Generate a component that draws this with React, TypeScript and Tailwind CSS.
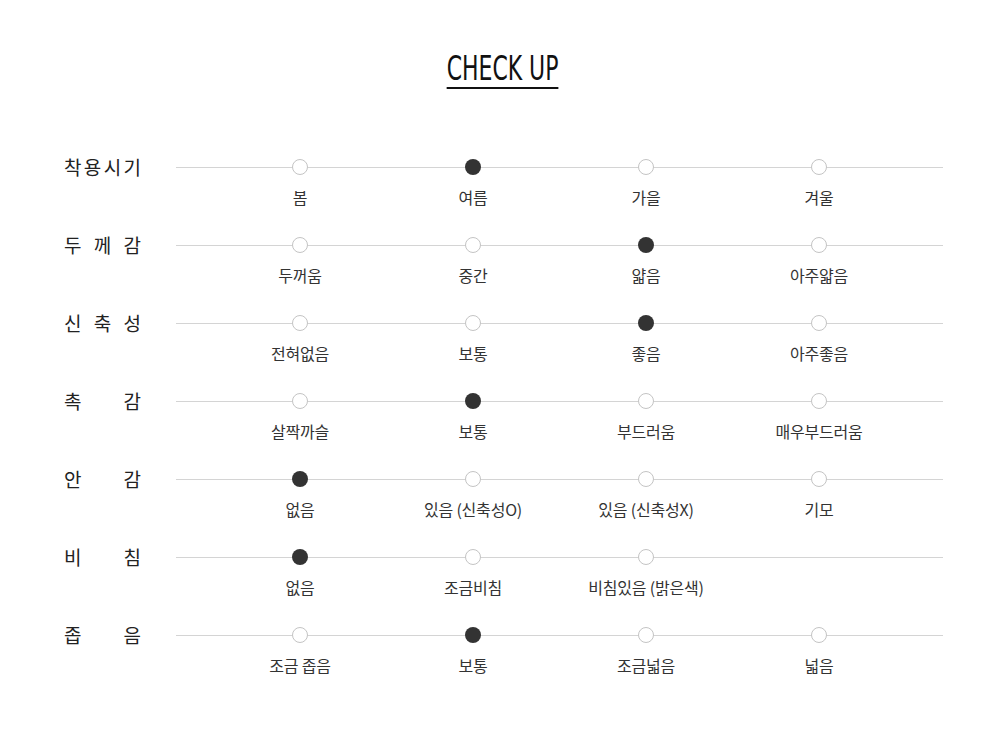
import React from 'react';

type Row = { label: string[]; options: string[]; selected: number };

const ROWS: Row[] = [
  { label: ['착', '용', '시', '기'], options: ['봄', '여름', '가을', '겨울'], selected: 1 },
  { label: ['두', '께', '감'], options: ['두꺼움', '중간', '얇음', '아주얇음'], selected: 2 },
  { label: ['신', '축', '성'], options: ['전혀없음', '보통', '좋음', '아주좋음'], selected: 2 },
  { label: ['촉', '감'], options: ['살짝까슬', '보통', '부드러움', '매우부드러움'], selected: 1 },
  { label: ['안', '감'], options: ['없음', '있음 (신축성O)', '있음 (신축성X)', '기모'], selected: 0 },
  { label: ['비', '침'], options: ['없음', '조금비침', '비침있음 (밝은색)'], selected: 0 },
  { label: ['좁', '음'], options: ['조금 좁음', '보통', '조금넓음', '넓음'], selected: 1 },
];

const KR = { fontFamily: '"Noto Sans CJK KR", "Noto Sans", sans-serif' };

function CheckRow({ row }: { row: Row }) {
  return (
    <div className="flex h-[78px] items-start">
      <div className="flex h-4 w-[77px] items-center justify-between text-[19px] text-[#222]">
        {row.label.map((c, i) => (
          <span key={i}>{c}</span>
        ))}
      </div>
      <div className="relative ml-[35px] flex-1">
        <div className="absolute left-0 right-0 top-[7.5px] h-px bg-[#d4d4d4]" />
        <div className="relative grid grid-cols-4 px-[37.5px]">
          {row.options.map((opt, i) => (
            <div key={opt} className="flex flex-col items-center">
              <span
                className={
                  i === row.selected
                    ? 'h-4 w-4 rounded-full bg-[#333]'
                    : 'h-4 w-4 rounded-full border border-[#c4c4c4] bg-white'
                }
              />
              <span className="mt-[11px] whitespace-nowrap text-[16px] leading-[22px] tracking-[-0.2px] text-[#333]">
                {opt}
              </span>
            </div>
          ))}
        </div>
      </div>
    </div>
  );
}

export default function App() {
  return (
    <div className="min-h-screen bg-white" style={KR}>
      <div className="flex justify-center pl-[6px] pt-[51px]">
        <h2
          className="origin-center scale-x-[0.74] border-b-2 border-[#111] text-[33px] leading-[36px] text-[#111]"
          style={{ fontFamily: '"DejaVu Sans Condensed", "DejaVu Sans", sans-serif' }}
        >
          CHECK UP
        </h2>
      </div>
      <div className="pl-[64px] pr-[57px] pt-[70px]">
        {ROWS.map((row, i) => (
          <CheckRow key={i} row={row} />
        ))}
      </div>
    </div>
  );
}
